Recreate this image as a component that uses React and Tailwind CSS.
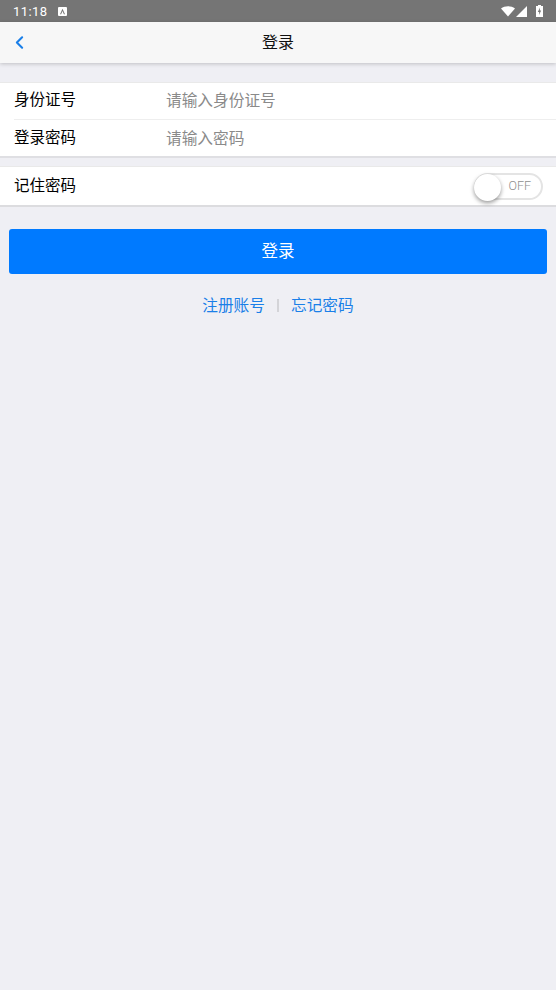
import { ChevronLeft } from "lucide-react";

const cjk = "font-['Roboto','Noto_Sans_CJK_SC',sans-serif]";

function StatusBar() {
  return (
    <div className="h-[22px] bg-[#757575] flex items-center pl-[13px] pr-[13px] text-white">
      <span className="text-[13px] font-normal tracking-[0.4px] leading-none">11:18</span>
      <span className="ml-[11px] w-[9px] h-[9px] bg-white rounded-[1px] flex items-center justify-center">
        <svg width="7" height="7" viewBox="0 0 7 7">
          <path d="M3.5 0.8 L6 6.2 H4.9 L3.5 3 L2.1 6.2 H1 Z" fill="#757575" />
        </svg>
      </span>
      <div className="ml-auto flex items-center">
        <svg width="14" height="11" viewBox="0 0 14 11">
          <path d="M0 2.6 C3.8 -0.6 10.2 -0.6 14 2.6 L7 10.6 Z" fill="#fff" />
        </svg>
        <svg className="ml-[1px]" width="11" height="11" viewBox="0 0 11 11">
          <path d="M0 11 L11 0 V11 Z" fill="#fff" />
        </svg>
        <svg className="ml-[9px]" width="7" height="12" viewBox="0 0 7 12">
          <path d="M2 0 H5 V1 H7 V12 H0 V1 H2 Z" fill="#fff" />
          <path d="M4 2.5 L1.8 7 H3.2 L3 10 L5.2 5.6 H3.8 Z" fill="#757575" />
        </svg>
      </div>
    </div>
  );
}

function NavBar() {
  return (
    <div className="relative h-[41px] bg-[#f7f7f7] flex items-center justify-center shadow-[0_1px_4px_rgba(0,0,0,0.2)]">
      <ChevronLeft className="absolute left-[9px] top-[10px] text-[#1a7fe8]" size={21} strokeWidth={2.4} />
      <span className="text-[16px] text-[#111]">登录</span>
    </div>
  );
}

function Field({ label, hint, divider }) {
  return (
    <div className="pl-[14px]">
      <div className={`flex items-center ${divider ? "h-[37px] border-b border-[#eeeeee]" : "h-[36px] pt-[2px]"}`}>
        <span className="w-[153px] text-[15.5px] text-black">{label}</span>
        <span className="-ml-[1px] text-[15.7px] text-[#8a8a8a]">{hint}</span>
      </div>
    </div>
  );
}

export default function App() {
  return (
    <div className={`w-[556px] h-[990px] bg-[#efeff4] flex flex-col overflow-hidden ${cjk}`}>
      <StatusBar />
      <NavBar />

      <div className="mt-[19px] bg-white border-t border-[#e9e9e9] border-b-2 border-b-[#dfdfe3]">
        <Field label="身份证号" hint="请输入身份证号" divider />
        <Field label="登录密码" hint="请输入密码" />
      </div>

      <div className="mt-[8px] h-[41px] bg-white border-t border-[#e9e9e9] border-b-2 border-b-[#dcdcdf] flex items-center pl-[14px] pr-[13px]">
        <span className="pt-[2px] text-[15.5px] text-black">记住密码</span>
        <div className="relative ml-auto w-[69px] h-[27px] rounded-full border-2 border-[#e4e4e4] bg-white flex items-center justify-end pr-[10px]">
          <span className="text-[12.5px] font-light text-[#8f8f8f]">OFF</span>
          <span className="absolute left-[-2px] top-[-1px] w-[27px] h-[27px] rounded-full bg-white shadow-[0_2px_4px_rgba(0,0,0,0.4)]" />
        </div>
      </div>

      <button className="mt-[22px] mx-[9px] h-[45px] pt-[1px] bg-[#007aff] rounded-[3px] text-white text-[16.5px]">登录</button>

      <div className="mt-[20px] flex items-center justify-center text-[15.7px] text-[#1a7fe8]">
        <span>注册账号</span>
        <span className="mx-[12px] w-[2px] h-[13px] bg-[#d4d4d8]" />
        <span>忘记密码</span>
      </div>
    </div>
  );
}
